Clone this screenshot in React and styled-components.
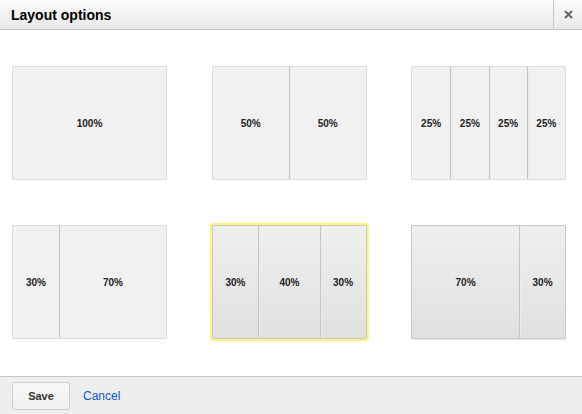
import React, { useState } from 'react';
import styled, { createGlobalStyle, css } from 'styled-components';

const GlobalStyle = createGlobalStyle`
  html, body {
    margin: 0;
    padding: 0;
    background: #fff;
  }
  body {
    font-family: "Liberation Sans", Arial, sans-serif;
  }
  * {
    box-sizing: border-box;
  }
`;

const Dialog = styled.div`
  width: 582px;
  height: 414px;
  display: flex;
  flex-direction: column;
  background: #fff;
`;

const Header = styled.div`
  height: 30px;
  display: flex;
  align-items: stretch;
  background: linear-gradient(to bottom, #fbfbfb, #e9e9e9);
  border-bottom: 1px solid #c6c6c6;
`;

const Title = styled.h1`
  flex: 1;
  margin: 0;
  padding: 0 0 0 11px;
  display: flex;
  align-items: center;
  font-size: 14px;
  font-weight: bold;
  color: #000;
`;

const CloseButton = styled.button`
  width: 29px;
  border: none;
  border-left: 1px solid #c6c6c6;
  background: transparent;
  padding: 0;
  display: flex;
  align-items: center;
  justify-content: center;
  cursor: pointer;
`;

const Body = styled.div`
  flex: 1;
  padding: 36px 0 0 12px;
`;

const Grid = styled.div`
  display: grid;
  grid-template-columns: repeat(3, 155px);
  grid-auto-rows: 114px;
  column-gap: 44.5px;
  row-gap: 45px;
`;

const Option = styled.div`
  display: flex;
  border: 1px solid #dcdcdc;
  border-radius: 1px;
  background: #f1f1f1;
  cursor: pointer;

  ${({ $raised }) =>
    $raised &&
    css`
      border-color: #c8c8c8;
      background: linear-gradient(to bottom, #efefef, #e0e0e0);
      box-shadow: 0 1px 1px rgba(0, 0, 0, 0.1);
    `}

  ${({ $selected }) =>
    $selected &&
    css`
      outline: 2px solid #fff57e;
      outline-offset: 0;
    `}
`;

const Column = styled.div`
  display: flex;
  align-items: center;
  justify-content: center;
  font-size: 10px;
  font-weight: bold;
  color: #222;

  & + & {
    border-left: 1px solid ${({ $raised }) => ($raised ? '#c4c4c4' : '#dcdcdc')};
    box-shadow: ${({ $raised }) => ($raised ? 'inset 1px 0 0 #ececec' : 'none')};
  }
`;

const Footer = styled.div`
  height: 38px;
  border-top: 1px solid #c6c6c6;
  background: #eeeeee;
  display: flex;
  align-items: center;
  gap: 13px;
  padding: 0 12px;
`;

const SaveButton = styled.button`
  width: 58px;
  height: 28px;
  border: 1px solid #cfcfcf;
  border-radius: 2px;
  background: linear-gradient(to bottom, #f8f8f8, #f1f1f1);
  font-family: inherit;
  font-size: 11px;
  font-weight: bold;
  color: #333;
  cursor: pointer;
`;

const CancelLink = styled.a`
  font-size: 12px;
  color: #1155cc;
  text-decoration: none;
  cursor: pointer;
`;

const layouts = [
  [100],
  [50, 50],
  [25, 25, 25, 25],
  [30, 70],
  [30, 40, 30],
  [70, 30],
];

const App = () => {
  const [selected, setSelected] = useState(4);

  return (
    <>
      <GlobalStyle />
      <Dialog>
        <Header>
          <Title>Layout options</Title>
          <CloseButton aria-label="Close">
            <svg width="9" height="9" viewBox="0 0 9 9">
              <path d="M1 1L8 8M8 1L1 8" stroke="#666" strokeWidth="2" />
            </svg>
          </CloseButton>
        </Header>

        <Body>
          <Grid>
            {layouts.map((cols, i) => {
              const raised = i >= 4;
              return (
                <Option
                  key={i}
                  $raised={raised}
                  $selected={selected === i}
                  onClick={() => setSelected(i)}
                >
                  {cols.map((w, j) => (
                    <Column key={j} $raised={raised} style={{ width: `${w}%` }}>
                      {w}%
                    </Column>
                  ))}
                </Option>
              );
            })}
          </Grid>
        </Body>

        <Footer>
          <SaveButton>Save</SaveButton>
          <CancelLink>Cancel</CancelLink>
        </Footer>
      </Dialog>
    </>
  );
};

export default App;
